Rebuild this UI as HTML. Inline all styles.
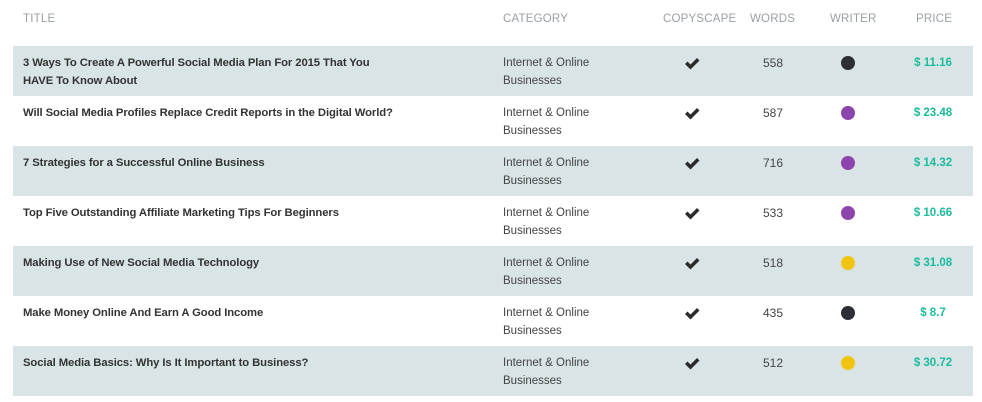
<!DOCTYPE html>
<html><head><style>
body{margin:0;background:#fff;font-family:"Liberation Sans",sans-serif;width:982px;height:402px;overflow:hidden;position:relative}
.h{position:absolute;top:13px;font-size:11.5px;color:#9aa0a6;letter-spacing:.2px}
.row{position:absolute;left:13px;width:960px;height:50px}
.row.a{background:#d9e4e6}
.c{position:absolute;top:8px;font-size:12px;line-height:18px;color:#333}
.t{left:10px;width:460px;font-weight:bold;font-size:11.3px;letter-spacing:-0.1px}
.cat{left:490px;color:#444;font-size:11.5px}
.chk{left:671px;top:11px}
.w{left:740px;width:40px;text-align:center;color:#444}
.dot{position:absolute;left:828px;top:10px;width:14px;height:14px;border-radius:50%}
.p{left:885px;width:70px;text-align:center;color:#1abc9c;font-weight:bold;font-size:11.5px}
</style></head><body>
<div class="h" style="left:23px">TITLE</div>
<div class="h" style="left:503px">CATEGORY</div>
<div class="h" style="left:663px">COPYSCAPE</div>
<div class="h" style="left:750px">WORDS</div>
<div class="h" style="left:830px">WRITER</div>
<div class="h" style="left:916px">PRICE</div>

<div class="row a" style="top:46px"><div class="c t">3 Ways To Create A Powerful Social Media Plan For 2015 That You<br>HAVE To Know About</div><div class="c cat">Internet &amp; Online<br>Businesses</div><svg class="c chk" width="16" height="13" viewBox="0 0 16 13"><path d="M1 7l2.5-2.5 3 3L13 1l2.5 2.5-9 9z" fill="#2b2b2b"/></svg><div class="c w">558</div><div class="dot" style="background:#2c2f33"></div><div class="c p">$ 11.16</div></div>
<div class="row" style="top:96px"><div class="c t">Will Social Media Profiles Replace Credit Reports in the Digital World?</div><div class="c cat">Internet &amp; Online<br>Businesses</div><svg class="c chk" width="16" height="13" viewBox="0 0 16 13"><path d="M1 7l2.5-2.5 3 3L13 1l2.5 2.5-9 9z" fill="#2b2b2b"/></svg><div class="c w">587</div><div class="dot" style="background:#8e44ad"></div><div class="c p">$ 23.48</div></div>
<div class="row a" style="top:146px"><div class="c t">7 Strategies for a Successful Online Business</div><div class="c cat">Internet &amp; Online<br>Businesses</div><svg class="c chk" width="16" height="13" viewBox="0 0 16 13"><path d="M1 7l2.5-2.5 3 3L13 1l2.5 2.5-9 9z" fill="#2b2b2b"/></svg><div class="c w">716</div><div class="dot" style="background:#8e44ad"></div><div class="c p">$ 14.32</div></div>
<div class="row" style="top:196px"><div class="c t">Top Five Outstanding Affiliate Marketing Tips For Beginners</div><div class="c cat">Internet &amp; Online<br>Businesses</div><svg class="c chk" width="16" height="13" viewBox="0 0 16 13"><path d="M1 7l2.5-2.5 3 3L13 1l2.5 2.5-9 9z" fill="#2b2b2b"/></svg><div class="c w">533</div><div class="dot" style="background:#8e44ad"></div><div class="c p">$ 10.66</div></div>
<div class="row a" style="top:246px"><div class="c t">Making Use of New Social Media Technology</div><div class="c cat">Internet &amp; Online<br>Businesses</div><svg class="c chk" width="16" height="13" viewBox="0 0 16 13"><path d="M1 7l2.5-2.5 3 3L13 1l2.5 2.5-9 9z" fill="#2b2b2b"/></svg><div class="c w">518</div><div class="dot" style="background:#f1c40f"></div><div class="c p">$ 31.08</div></div>
<div class="row" style="top:296px"><div class="c t">Make Money Online And Earn A Good Income</div><div class="c cat">Internet &amp; Online<br>Businesses</div><svg class="c chk" width="16" height="13" viewBox="0 0 16 13"><path d="M1 7l2.5-2.5 3 3L13 1l2.5 2.5-9 9z" fill="#2b2b2b"/></svg><div class="c w">435</div><div class="dot" style="background:#2c2f33"></div><div class="c p">$ 8.7</div></div>
<div class="row a" style="top:346px"><div class="c t">Social Media Basics: Why Is It Important to Business?</div><div class="c cat">Internet &amp; Online<br>Businesses</div><svg class="c chk" width="16" height="13" viewBox="0 0 16 13"><path d="M1 7l2.5-2.5 3 3L13 1l2.5 2.5-9 9z" fill="#2b2b2b"/></svg><div class="c w">512</div><div class="dot" style="background:#f1c40f"></div><div class="c p">$ 30.72</div></div>
</body></html>
